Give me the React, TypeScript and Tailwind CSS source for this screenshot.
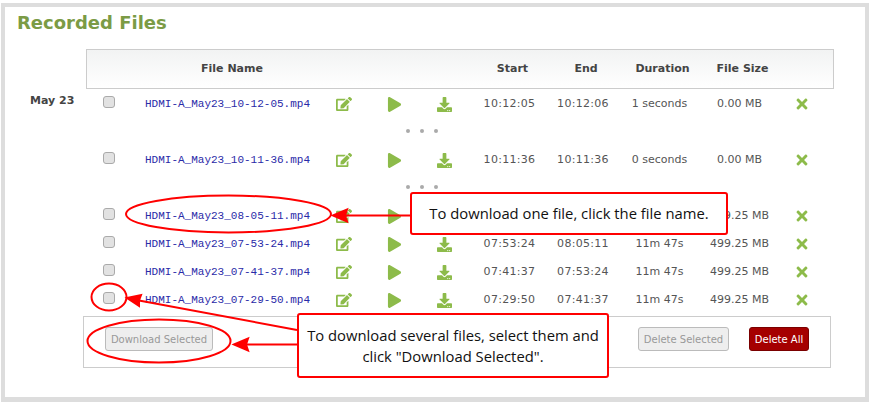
import { FaDownload, FaEdit, FaPlay, FaTimes } from "react-icons/fa";

// the third row's times sit under the callout in the picture, so only the size shows
const files = [
  { name: "HDMI-A_May23_10-12-05.mp4", start: "10:12:05", end: "10:12:06", duration: "1 seconds", size: "0.00 MB", dots: true },
  { name: "HDMI-A_May23_10-11-36.mp4", start: "10:11:36", end: "10:11:36", duration: "0 seconds", size: "0.00 MB", dots: true },
  { name: "HDMI-A_May23_08-05-11.mp4", start: "", end: "", duration: "", size: "499.25 MB" },
  { name: "HDMI-A_May23_07-53-24.mp4", start: "07:53:24", end: "08:05:11", duration: "11m 47s", size: "499.25 MB" },
  { name: "HDMI-A_May23_07-41-37.mp4", start: "07:41:37", end: "07:53:24", duration: "11m 47s", size: "499.25 MB" },
  { name: "HDMI-A_May23_07-29-50.mp4", start: "07:29:50", end: "07:41:37", duration: "11m 47s", size: "499.25 MB" },
];

function Dots() {
  return (
    <div className="flex h-7 items-center gap-[10px] pl-[401px]">
      <span className="h-1 w-1 rounded-full bg-[#aaaaaa]" />
      <span className="h-1 w-1 rounded-full bg-[#aaaaaa]" />
      <span className="h-1 w-1 rounded-full bg-[#aaaaaa]" />
    </div>
  );
}

export default function App() {
  return (
    <div className="relative h-[410px] w-[875px] overflow-hidden bg-white pl-px pt-[3px] font-['DejaVu_Sans',sans-serif] text-[11px] text-[#555555]">
      <div className="h-[399px] w-[868px] border-[4px] border-b-[5px] border-[#dddddd] bg-white">
        <h1 className="h-[42px] pl-3 pt-1.5 text-[18px] font-bold leading-5 text-[#7b9b45]">Recorded Files</h1>

        <div className="ml-[81px] flex h-10 w-[748px] items-center border border-[#cccccc] bg-gradient-to-b from-[#f2f3f3] to-white font-bold text-[#444444]">
          <span className="ml-[58px] w-[174px] text-center">File Name</span>
          <span className="ml-[150px] w-[81px] pl-1.5 text-center">Start</span>
          <span className="w-[66px] pl-1.5 text-center">End</span>
          <span className="w-[87px] pl-1.5 text-center">Duration</span>
          <span className="w-[73px] pl-1.5 text-center">File Size</span>
        </div>

        {files.map((file, i) => (
          <div key={file.name}>
            <div className="flex h-7 items-center">
              <span className="w-[92px] pb-1 pl-[25px] font-bold text-[#444444]">{i === 0 ? "May 23" : ""}</span>
              <span className="flex w-6 justify-center pb-0.5">
                <input type="checkbox" disabled className="h-3 w-3 appearance-none rounded-[3px] border border-[#aaaaaa] bg-[#e2e2e2]" />
              </span>
              <a className="ml-6 w-[174px] pt-0.5 font-['Liberation_Mono',monospace] text-[11px] text-[#2a2aa8]">{file.name}</a>
              <span className="flex w-[50px] justify-center pt-0.5 text-[#8dbb4a]"><FaEdit size={16} /></span>
              <span className="flex w-[50px] justify-center pt-0.5 text-[#8dbb4a]"><FaPlay size={15} /></span>
              <span className="flex w-[50px] justify-center pt-0.5 text-[#8dbb4a]"><FaDownload size={15} /></span>
              <span className="w-[81px] pt-0.5 text-center tracking-[0.3px]">{file.start}</span>
              <span className="w-[66px] pt-0.5 text-center tracking-[0.3px]">{file.end}</span>
              <span className="w-[87px] pt-0.5 text-center">{file.duration}</span>
              <span className="w-[73px] pt-0.5 text-center">{file.size}</span>
              <span className="flex w-[52px] justify-center pt-0.5 text-[#8dbb4a]"><FaTimes size={16} /></span>
            </div>
            {file.dots && <Dots />}
          </div>
        ))}

        <div className="ml-[78px] mt-[3px] flex h-[52px] w-[748px] items-center border border-[#cccccc] px-[21px] pb-1.5 text-[10px]">
          <button className="h-6 w-[108px] rounded-[3px] border border-[#bbbbbb] bg-[#eeeeee] text-[#999999]">Download Selected</button>
          <button className="ml-auto h-6 w-[91px] rounded-[3px] border border-[#bbbbbb] bg-[#eeeeee] text-[#999999]">Delete Selected</button>
          <button className="ml-5 h-6 w-[60px] rounded-[3px] border border-[#7a0000] bg-[#a50000] text-white">Delete All</button>
        </div>
      </div>

      <svg className="pointer-events-none absolute inset-0" width="875" height="410" fill="none" stroke="#ff0000" strokeWidth="2">
        <ellipse cx="228.5" cy="214" rx="102.5" ry="18.5" />
        <ellipse cx="109" cy="297" rx="17.5" ry="13.5" />
        <ellipse cx="159" cy="341" rx="71.5" ry="21.5" />
        <path d="M345 215.5H411" />
        <path d="M333 215.5L347 209.5L345 215.5L347 221.5Z" fill="#ff0000" />
        <path d="M139 300.5L297 330" />
        <path d="M127 298L141 295L139 300.5L139 306Z" fill="#ff0000" />
        <path d="M246 344.5H297" />
        <path d="M234 344.5L248 338.5L246 344.5L248 350.5Z" fill="#ff0000" />
      </svg>

      <div className="absolute left-[410px] top-[192px] flex h-[43px] w-[318px] items-center justify-center rounded-[3px] border-2 border-[#ff0000] bg-white font-['Open_Sans',sans-serif] text-[14.8px] text-[#111111]">
        To download one file, click the file name.
      </div>
      <div className="absolute left-[297px] top-[313px] flex h-[65px] w-[312px] items-center justify-center rounded-[3px] border-2 border-[#ff0000] bg-white text-center font-['Open_Sans',sans-serif] text-[14.8px] leading-[21px] text-[#111111]">
        To download several files, select them and
        <br />
        click "Download Selected".
      </div>
    </div>
  );
}
